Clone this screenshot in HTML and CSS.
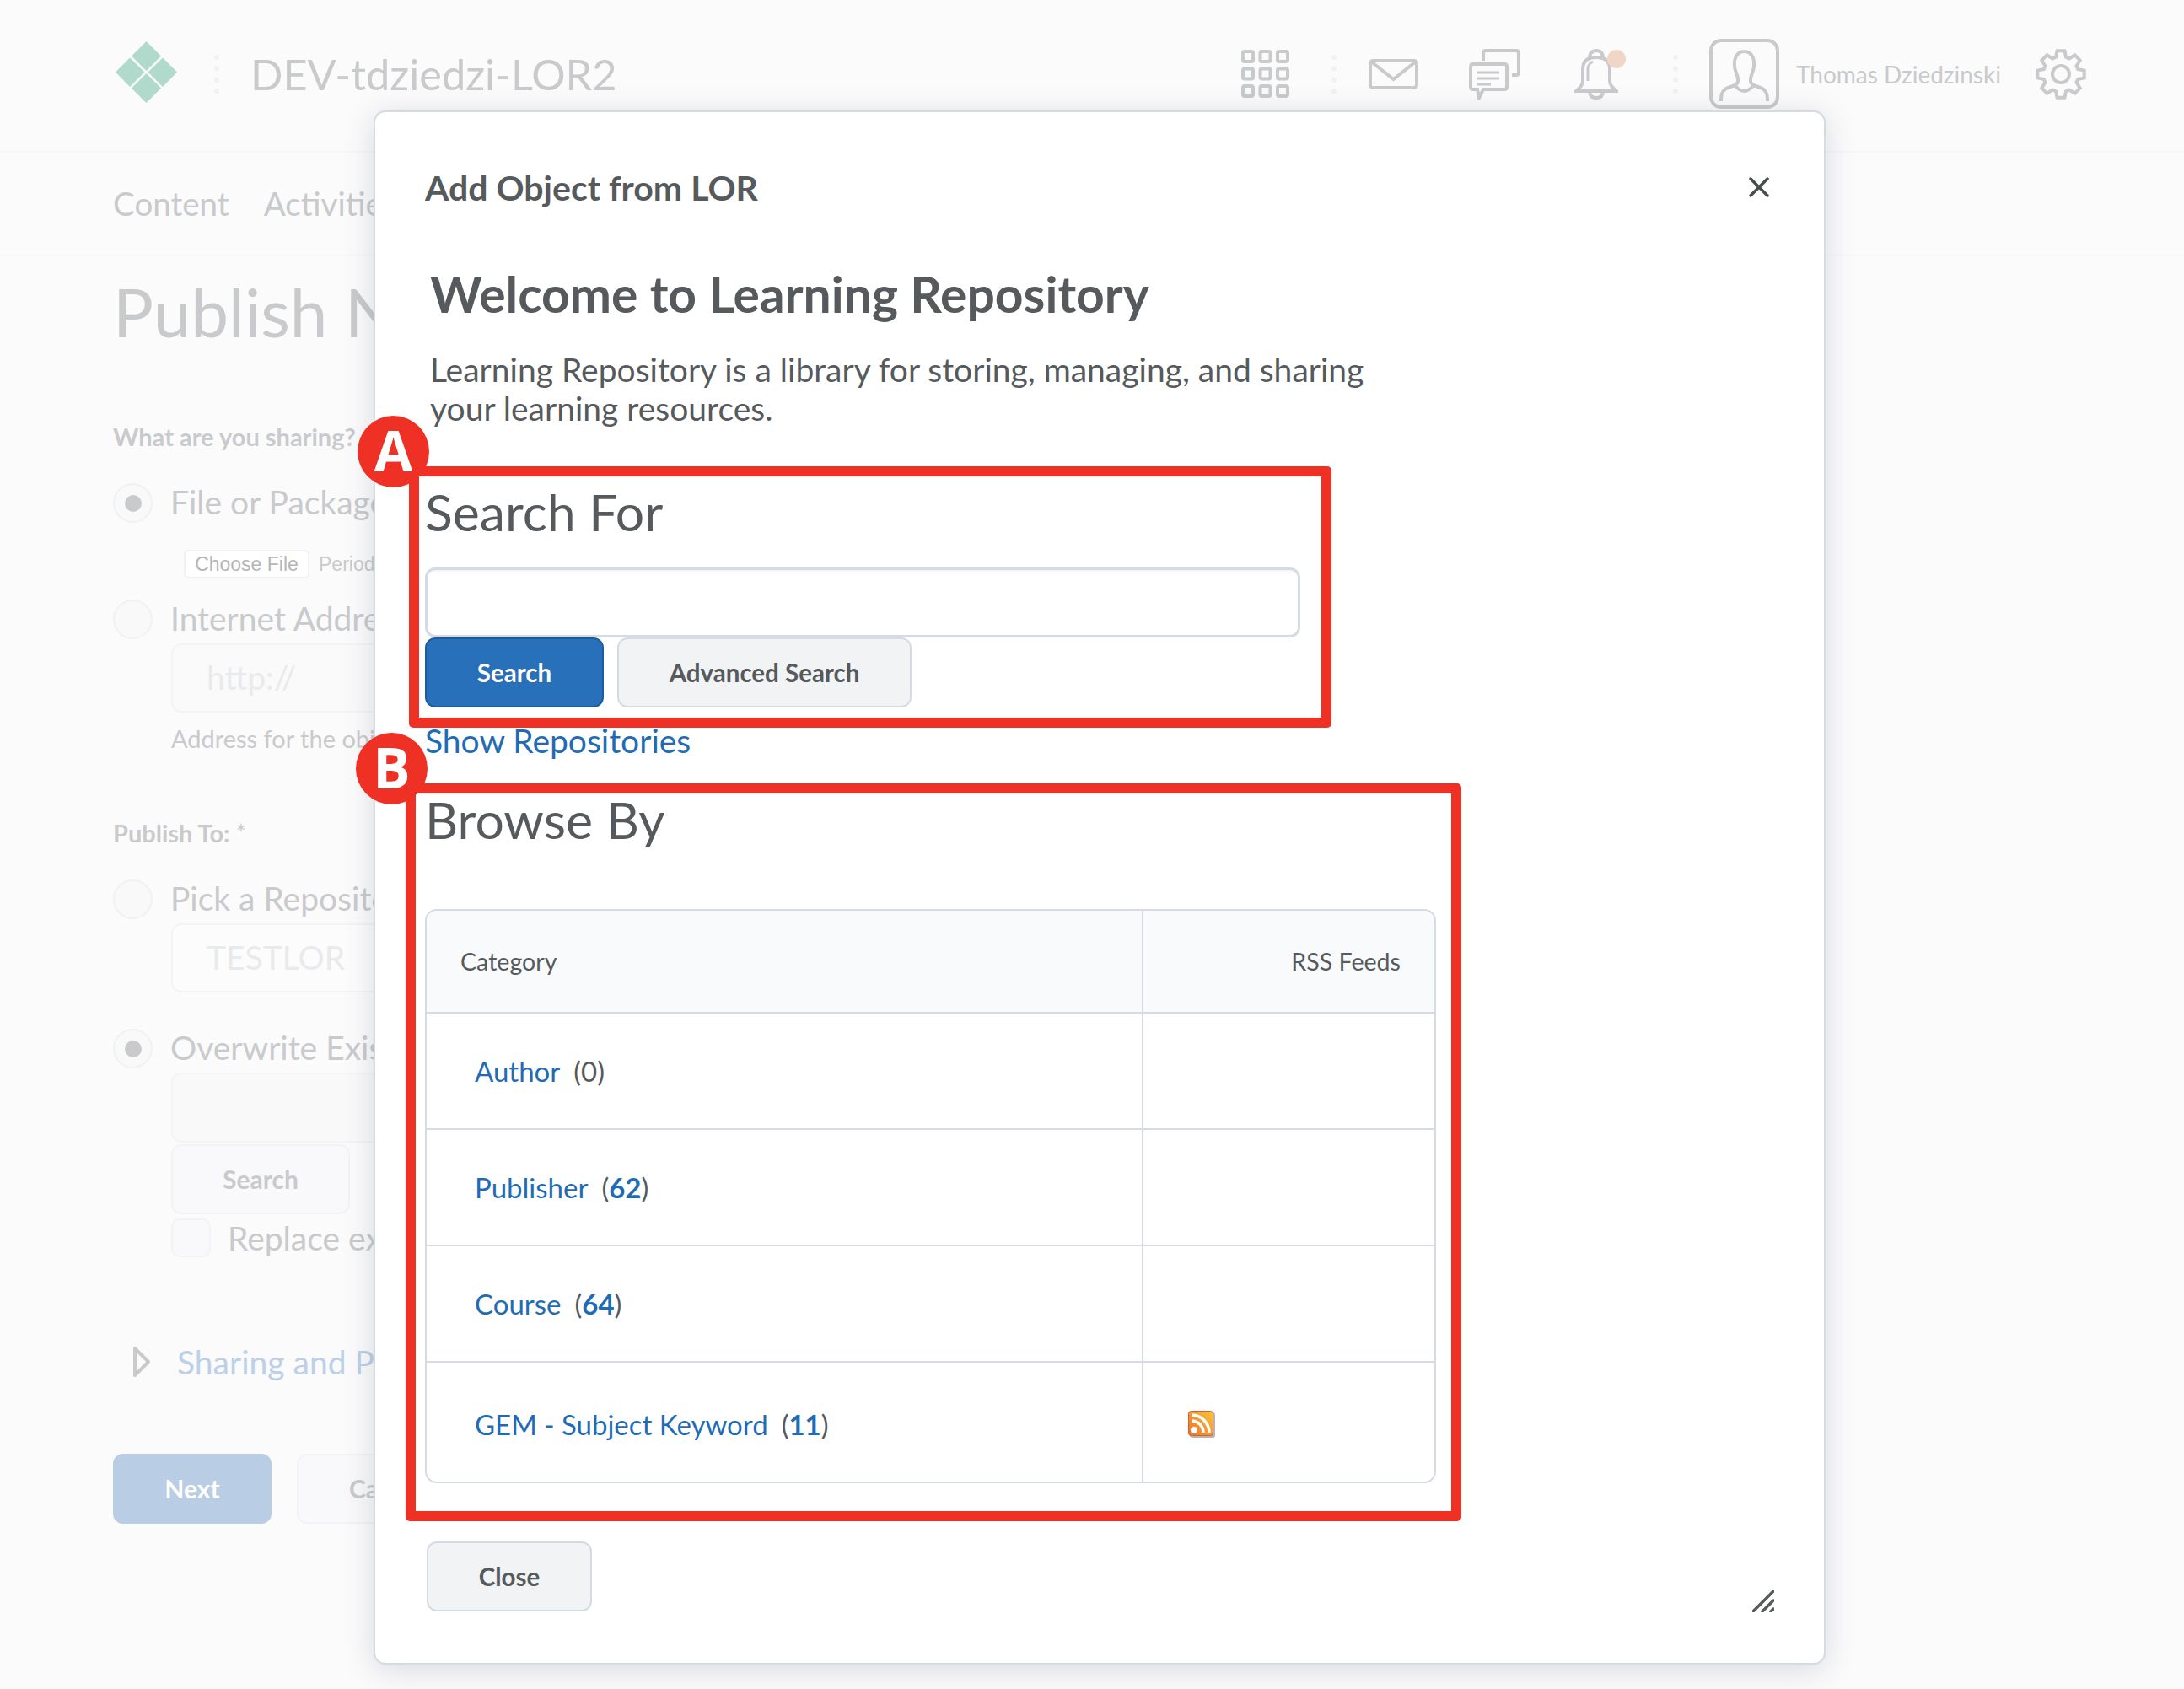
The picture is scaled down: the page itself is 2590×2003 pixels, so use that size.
FILE: index.html
```html
<!DOCTYPE html>
<html lang="en">
<head>
    <meta charset="UTF-8">
    <meta name="viewport" content="width=device-width, initial-scale=1.0">
    <title>Add Object from LOR</title>
    <link rel="stylesheet" href="styles.css">
</head>
<body>
    <header class="topbar">
        <svg class="logo" viewBox="0 0 73 73">
            <polygon points="36.500,0 54,17.500 36.500,35 19,17.500"/>
            <polygon points="56,19.500 73,36.500 56,54 38.500,36.500"/>
            <polygon points="17,19.500 34.500,36.500 17,54 0,36.500"/>
            <polygon points="36.500,38 54,55.500 36.500,73 19,55.500"/>
        </svg>
        <span class="dots dots-logo"></span>
        <span class="org-name">DEV-tdziedzi-LOR2</span>
        <div class="topbar-right">
            <svg class="icon icon-grid" viewBox="0 0 57 57">
                <rect x="2" y="2" width="12" height="12" rx="2"/><rect x="22.500" y="2" width="12" height="12" rx="2"/><rect x="43" y="2" width="12" height="12" rx="2"/>
                <rect x="2" y="22.500" width="12" height="12" rx="2"/><rect x="22.500" y="22.500" width="12" height="12" rx="2"/><rect x="43" y="22.500" width="12" height="12" rx="2"/>
                <rect x="2" y="43" width="12" height="12" rx="2"/><rect x="22.500" y="43" width="12" height="12" rx="2"/><rect x="43" y="43" width="12" height="12" rx="2"/>
            </svg>
            <span class="dots dots-grid"></span>
            <svg class="icon icon-mail" viewBox="0 0 59 36">
                <rect x="2" y="2" width="55" height="32" rx="3"/>
                <path d="M3 3 L29.500 24 L56 3"/>
            </svg>
            <svg class="icon icon-chat" viewBox="0 0 61 60">
                <path d="M17 14 V5 Q17 2 20 2 H56 Q59 2 59 5 V28 Q59 31 56 31 H51"/>
                <path d="M5 18 H42 Q45 18 45 21 V45 Q45 48 42 48 H17 L12 58 L10 48 H5 Q2 48 2 45 V21 Q2 18 5 18 Z"/>
                <path d="M10 28 H36 M10 35 H36 M10 42 H26" class="thin"/>
            </svg>
            <span class="bell-wrap">
                <svg class="icon icon-bell" viewBox="0 0 52 60">
                    <path d="M18 12 Q18 2 26 2 Q34 2 34 12"/>
                    <path d="M10 24 Q10 10 26 10 Q42 10 42 24 V38 Q42 44 50 50 H2 Q10 44 10 38 Z"/>
                    <path d="M16 38 V24 Q16 18 22 15" class="thin"/>
                    <path d="M18 50 Q18 58 26 58 Q34 58 34 50"/>
                </svg>
                <span class="bell-dot"></span>
            </span>
            <span class="dots dots-user"></span>
            <svg class="icon icon-avatar" viewBox="0 0 83 83">
                <rect x="2" y="2" width="79" height="79" rx="12"/>
                <path d="M41.500 15 C33 15 29 23 30 33 C31 41 35 44 34 51 C33 56 26 56 20 59 C15 62 14 66 14 74"/>
                <path d="M41.500 15 C50 15 54 23 53 33 C52 41 48 44 49 51 C50 56 57 56 63 59 C68 62 69 66 69 74"/>
                <path d="M31 56 Q41.500 68 52 56"/>
            </svg>
            <span class="user-name">Thomas Dziedzinski</span>
            <svg class="icon icon-gear" viewBox="0 0 60 60">
                <path d="M34.400 2.300 L36.100 9.900 L39.900 11.500 L46.500 7.300 L52.700 13.500 L48.500 20.100 L50.100 23.900 L57.700 25.600 L57.700 34.400 L50.100 36.100 L48.500 39.900 L52.700 46.500 L46.500 52.700 L39.900 48.500 L36.100 50.100 L34.400 57.700 L25.600 57.700 L23.900 50.100 L20.100 48.500 L13.500 52.700 L7.300 46.500 L11.500 39.900 L9.900 36.100 L2.300 34.400 L2.300 25.600 L9.900 23.900 L11.500 20.100 L7.300 13.500 L13.500 7.300 L20.100 11.500 L23.900 9.900 L25.600 2.300 Z"/>
                <circle cx="30" cy="30" r="10"/>
            </svg>
        </div>
    </header>

    <nav class="navbar">
        <span>Content</span>
        <span>Activities</span>
    </nav>

    <main class="page">
        <h1 class="page-title">Publish New</h1>
        <div class="field-label share-label">What are you sharing?</div>
        <div class="radio-row row-file"><span class="radio checked"></span>File or Package</div>
        <div class="file-row"><span class="file-btn">Choose File</span><span class="file-note">Period</span></div>
        <div class="radio-row row-address"><span class="radio"></span>Internet Address</div>
        <div class="fake-input input-address">http://</div>
        <div class="hint">Address for the object</div>
        <div class="field-label publish-label">Publish To: <span class="star">*</span></div>
        <div class="radio-row row-pick"><span class="radio"></span>Pick a Repository</div>
        <div class="fake-input input-pick">TESTLOR</div>
        <div class="radio-row row-overwrite"><span class="radio checked"></span>Overwrite Existing</div>
        <div class="fake-input input-overwrite"></div>
        <div class="page-btn btn-find">Search</div>
        <div class="check-row"><span class="checkbox"></span>Replace existing</div>
        <div class="sharing-row">
            <svg class="caret" viewBox="0 0 20 36"><path d="M2 2 L18 18 L2 34 Z"/></svg>
            <span>Sharing and Permissions</span>
        </div>
        <div class="page-actions">
            <div class="page-btn btn-next">Next</div>
            <div class="page-btn btn-cancel">Cancel</div>
        </div>
    </main>

    <section class="modal">
        <div class="modal-head">
            <h3>Add Object from LOR</h3>
            <svg class="modal-close" viewBox="0 0 24 24"><path d="M2 2 L22 22 M22 2 L2 22"/></svg>
        </div>
        <h1 class="welcome">Welcome to Learning Repository</h1>
        <p class="intro">Learning Repository is a library for storing, managing, and sharing<br>your learning resources.</p>

        <h2 class="section-title search-title">Search For</h2>
        <input class="search-input" type="text">
        <div class="search-actions">
            <button class="btn btn-primary">Search</button>
            <button class="btn btn-advanced">Advanced Search</button>
        </div>
        <a class="show-repos" href="#">Show Repositories</a>

        <h2 class="section-title browse-title">Browse By</h2>
        <div class="table-wrap">
            <table class="browse-table">
                <thead>
                    <tr>
                        <th class="col-cat">Category</th>
                        <th class="col-rss">RSS Feeds</th>
                    </tr>
                </thead>
                <tbody>
                    <tr class="row-std">
                        <td class="col-cat"><a href="#">Author</a><span class="count">(0)</span></td>
                        <td class="col-rss"></td>
                    </tr>
                    <tr class="row-std">
                        <td class="col-cat"><a href="#">Publisher</a><span class="count">(<a href="#"><b>62</b></a>)</span></td>
                        <td class="col-rss"></td>
                    </tr>
                    <tr class="row-std">
                        <td class="col-cat"><a href="#">Course</a><span class="count">(<a href="#"><b>64</b></a>)</span></td>
                        <td class="col-rss"></td>
                    </tr>
                    <tr class="row-last">
                        <td class="col-cat"><a href="#">GEM - Subject Keyword</a><span class="count">(<a href="#"><b>11</b></a>)</span></td>
                        <td class="col-rss">
                            <svg class="rss" viewBox="0 0 32 32">
                                <defs>
                                    <linearGradient id="rssFill" x1="0" y1="1" x2="1" y2="0">
                                        <stop offset="0" stop-color="#ee6f2a"/>
                                        <stop offset="1" stop-color="#f8c53c"/>
                                    </linearGradient>
                                </defs>
                                <rect x="2" y="2" width="30" height="30" rx="3" fill="#b9b4ac"/>
                                <rect x="0.500" y="0.500" width="29" height="29" rx="3" fill="url(#rssFill)" stroke="#d2603a" stroke-width="1"/>
                                <circle cx="7" cy="23" r="4" fill="#fff"/>
                                <path d="M4 12 A14 14 0 0 1 18 26 M4 5 A21 21 0 0 1 25 26" fill="none" stroke="#fff" stroke-width="3.500"/>
                            </svg>
                        </td>
                    </tr>
                </tbody>
            </table>
        </div>
        <button class="btn btn-close">Close</button>
        <svg class="resize-grip" viewBox="0 0 26 26"><path d="M1 25 L25 1 M12 25 L25 12 M22 25 L25 22"/></svg>

        <!-- red callouts drawn on top of the dialog -->
        <div class="callout callout-a"></div>
        <div class="callout callout-b"></div>
        <div class="badge badge-a">A</div>
        <div class="badge badge-b">B</div>
    </section>
</body>
</html>
```

FILE: styles.css
```css
html, body {
    margin: 0;
    height: 2003px;
    overflow: hidden;
}
body {
    position: relative;
    background-color: #fbfbfc;
    color: #c9cacc;
    font-family: Lato, "Open Sans", sans-serif;
}

/* top bar */
.topbar {
    height: 175px;
    padding: 0 116px 4px 137px;
    display: flex;
    align-items: center;
    border-bottom: 2px solid #f6f6f7;
}
.logo {
    width: 73px;
    height: 73px;
    fill: #b0dacb;
    margin-top: -4px;
}
.dots {
    display: block;
    height: 46px;
    border-left: 6px dotted #f0f1f3;
}
.dots-logo {
    margin: 0 37px 0 44px;
}
.org-name {
    font-size: 50.500px;
    font-weight: 400;
    line-height: 60px;
}
.topbar-right {
    margin-left: auto;
    display: flex;
    align-items: center;
}
.icon {
    display: block;
    fill: none;
    stroke: #c9cacc;
    stroke-width: 4;
}
.icon .thin {
    stroke-width: 3;
}
.icon-grid {
    width: 57px;
    height: 57px;
}
.dots-grid {
    margin: 0 38px 0 50px;
}
.icon-mail {
    width: 59px;
    height: 36px;
    margin-right: 60px;
}
.icon-chat {
    width: 61px;
    height: 60px;
    margin-right: 64px;
}
.bell-wrap {
    display: block;
    position: relative;
    width: 61px;
    height: 60px;
}
.icon-bell {
    width: 52px;
    height: 60px;
}
.bell-dot {
    position: absolute;
    right: 0;
    top: 1px;
    width: 22px;
    height: 22px;
    border-radius: 50%;
    background: #f0d6c6;
}
.dots-user {
    margin: 0 37px 0 56px;
}
.icon-avatar {
    width: 83px;
    height: 83px;
}
.user-name {
    font-size: 28px;
    margin: 0 40px 0 20px;
    width: 244px;
    white-space: nowrap;
}
.icon-gear {
    width: 60px;
    height: 60px;
}

/* course nav */
.navbar {
    height: 120px;
    padding-left: 134px;
    display: flex;
    align-items: center;
    gap: 41px;
    font-size: 38.600px;
    border-bottom: 3px solid #f8f8f9;
}

/* dimmed form behind the dialog */
.page {
    padding: 17px 0 0 134px;
    white-space: nowrap;
}
.page-title {
    margin: 0;
    font-size: 80px;
    font-weight: 400;
    line-height: 96px;
    color: #c9cacc;
}
.field-label {
    font-size: 29px;
    font-weight: 700;
    line-height: 34px;
}
.share-label {
    margin-top: 84px;
}
.publish-label {
    margin-top: 77px;
}
.star {
    font-weight: 400;
}
.radio-row {
    display: flex;
    align-items: flex-start;
    gap: 21px;
    height: 47px;
    font-size: 39px;
    line-height: 44px;
}
.radio {
    width: 47px;
    height: 47px;
    box-sizing: border-box;
    border: 2px solid #f1f1f3;
    border-radius: 50%;
    background: #f9f9fa;
    display: flex;
    align-items: center;
    justify-content: center;
}
.radio.checked::after {
    content: "";
    width: 20px;
    height: 20px;
    border-radius: 50%;
    background: #c9cacc;
}
.row-file {
    margin-top: 38px;
}
.row-address {
    margin-top: 25px;
}
.row-pick {
    margin-top: 38px;
}
.row-overwrite {
    margin-top: 43px;
}
.file-row {
    margin: 32px 0 0 84px;
    display: flex;
    align-items: center;
    gap: 11px;
    height: 34px;
    font-family: "Liberation Sans", Arial, sans-serif;
    font-size: 23px;
}
.file-btn {
    width: 149px;
    height: 34px;
    box-sizing: border-box;
    border: 2px solid #f1f1f3;
    border-radius: 6px;
    background: #fff;
    color: #b5b6b8;
    text-align: center;
    line-height: 30px;
}
.fake-input {
    margin-left: 69px;
    width: 500px;
    height: 82px;
    box-sizing: border-box;
    border: 2px solid #f4f4f6;
    border-radius: 12px;
    background: #fafafb;
    padding-left: 40px;
    font-size: 39px;
    line-height: 76px;
    color: #e9eaec;
}
.input-address {
    margin-top: 5px;
}
.input-pick {
    margin-top: 5px;
    background: #fcfcfd;
}
.input-overwrite {
    margin-top: 5px;
    height: 83px;
    background: #f9f9fa;
}
.hint {
    margin: 13px 0 0 69px;
    font-size: 29px;
    line-height: 36px;
}
.page-btn {
    height: 83px;
    box-sizing: border-box;
    border: 2px solid #f3f3f6;
    border-radius: 12px;
    background: #f9f9fb;
    font-size: 30px;
    font-weight: 700;
    line-height: 79px;
    text-align: center;
}
.btn-find {
    margin: 2px 0 0 69px;
    width: 212px;
}
.check-row {
    margin: 5px 0 0 69px;
    display: flex;
    align-items: center;
    gap: 20px;
    height: 46px;
    font-size: 39px;
}
.checkbox {
    width: 47px;
    height: 46px;
    box-sizing: border-box;
    border: 2px solid #f3f3f6;
    border-radius: 10px;
    background: #f9f9fb;
}
.sharing-row {
    margin-top: 101px;
    padding-left: 24px;
    display: flex;
    align-items: center;
    gap: 32px;
    height: 46px;
    font-size: 39px;
    color: #bcd0e7;
}
.caret {
    width: 20px;
    height: 36px;
    fill: none;
    stroke: #c9cacc;
    stroke-width: 4;
    stroke-linejoin: round;
}
.page-actions {
    margin-top: 86px;
    display: flex;
    gap: 30px;
}
.btn-next {
    width: 188px;
    border: none;
    background: #b9cde5;
    color: #fff;
    line-height: 83px;
}
.btn-cancel {
    padding: 0 60px;
}

/* dialog */
.modal {
    position: absolute;
    left: 443px;
    top: 131px;
    width: 1722px;
    height: 1843px;
    box-sizing: border-box;
    border: 2px solid #d5dae4;
    border-radius: 14px;
    background: #fff;
    color: #565a5c;
    box-shadow: 0 6px 36px rgba(60, 66, 80, 0.18);
    padding: 67px 0 0 59px;
}
.modal-head {
    height: 46px;
    position: relative;
}
.modal-head h3 {
    margin: 0;
    font-size: 41px;
    font-weight: 700;
    line-height: 46px;
}
.modal-close {
    position: absolute;
    top: 10px;
    left: 1570px;
    width: 24px;
    height: 24px;
    fill: none;
    stroke: #494c4e;
    stroke-width: 3.500;
    stroke-linecap: round;
}
.welcome {
    margin: 68px 0 0 6px;
    font-size: 58.800px;
    font-weight: 700;
    line-height: 70px;
}
.intro {
    margin: 31px 0 0 6px;
    font-size: 39px;
    line-height: 46px;
}
.section-title {
    margin: 0;
    font-size: 60.700px;
    font-weight: 400;
    line-height: 72px;
}
.search-title {
    margin-top: 64px;
}
.search-input {
    display: block;
    margin-top: 30px;
    width: 1038px;
    height: 83px;
    box-sizing: border-box;
    border: 3px solid #d5dae4;
    border-radius: 12px;
    box-shadow: inset 0 4px 2px -2px #f4f5f7;
    background: #fff;
}
.search-actions {
    display: flex;
    gap: 16px;
}
.btn {
    height: 83px;
    box-sizing: border-box;
    border-radius: 12px;
    font-family: inherit;
    font-size: 29.500px;
    font-weight: 700;
    padding: 0;
}
.btn-primary {
    width: 212px;
    background: #2870b9;
    border: 2px solid #1f5c9e;
    color: #fff;
}
.btn-advanced {
    width: 349px;
    background: #f1f3f5;
    border: 2px solid #d5dae4;
    color: #565a5c;
}
.show-repos {
    display: block;
    margin-top: 16px;
    font-size: 39px;
    line-height: 46px;
    color: #1f6cb5;
    text-decoration: none;
}
.browse-title {
    margin-top: 35px;
}
.table-wrap {
    margin-top: 70px;
    width: 1199px;
    height: 681px;
    box-sizing: border-box;
    border: 2px solid #d5dae4;
    border-radius: 14px;
    overflow: hidden;
}
.browse-table {
    width: 100%;
    border-collapse: collapse;
    table-layout: fixed;
}
.browse-table th {
    height: 120px;
    padding: 0;
    font-size: 28.600px;
    font-weight: 400;
    background: #f9fafc;
    border-bottom: 2px solid #d5dae4;
}
.browse-table th.col-cat {
    padding-left: 40px;
    text-align: left;
    width: 849px;
    box-sizing: border-box;
}
.browse-table th.col-rss {
    padding-right: 40px;
    text-align: right;
    border-left: 2px solid #d5dae4;
}
.browse-table td {
    padding: 0;
    font-size: 33px;
    border-bottom: 2px solid #d5dae4;
}
.browse-table td.col-cat {
    padding-left: 57px;
}
.browse-table td.col-rss {
    border-left: 2px solid #d5dae4;
    padding-left: 53px;
}
.browse-table .row-std td {
    height: 136px;
}
.browse-table .row-last td {
    height: 145px;
    border-bottom: none;
}
.browse-table a {
    color: #1f6cb5;
    text-decoration: none;
}
.count {
    margin-left: 16px;
}
.rss {
    display: block;
    width: 32px;
    height: 32px;
}
.btn-close {
    display: block;
    margin: 69px 0 0 2px;
    width: 196px;
    background: #f1f3f5;
    border: 2px solid #d5dae4;
    color: #565a5c;
}
.resize-grip {
    position: absolute;
    left: 1633px;
    top: 1753px;
    width: 26px;
    height: 26px;
    fill: none;
    stroke: #565a5c;
    stroke-width: 3.500;
    stroke-linecap: round;
}
.callout {
    position: absolute;
    box-sizing: border-box;
    border: 12px solid #ee3124;
    border-radius: 5px;
}
.callout-a {
    left: 40px;
    top: 420px;
    width: 1094px;
    height: 310px;
}
.callout-b {
    left: 36px;
    top: 796px;
    width: 1252px;
    height: 875px;
}
.badge {
    position: absolute;
    width: 85px;
    height: 85px;
    border-radius: 50%;
    background: #ee3124;
    color: #fff;
    font-family: "Open Sans", sans-serif;
    font-size: 66px;
    font-weight: 700;
    line-height: 80px;
    text-align: center;
}
.badge-a {
    left: -21px;
    top: 360px;
}
.badge-b {
    left: -23px;
    top: 736px;
}
```
